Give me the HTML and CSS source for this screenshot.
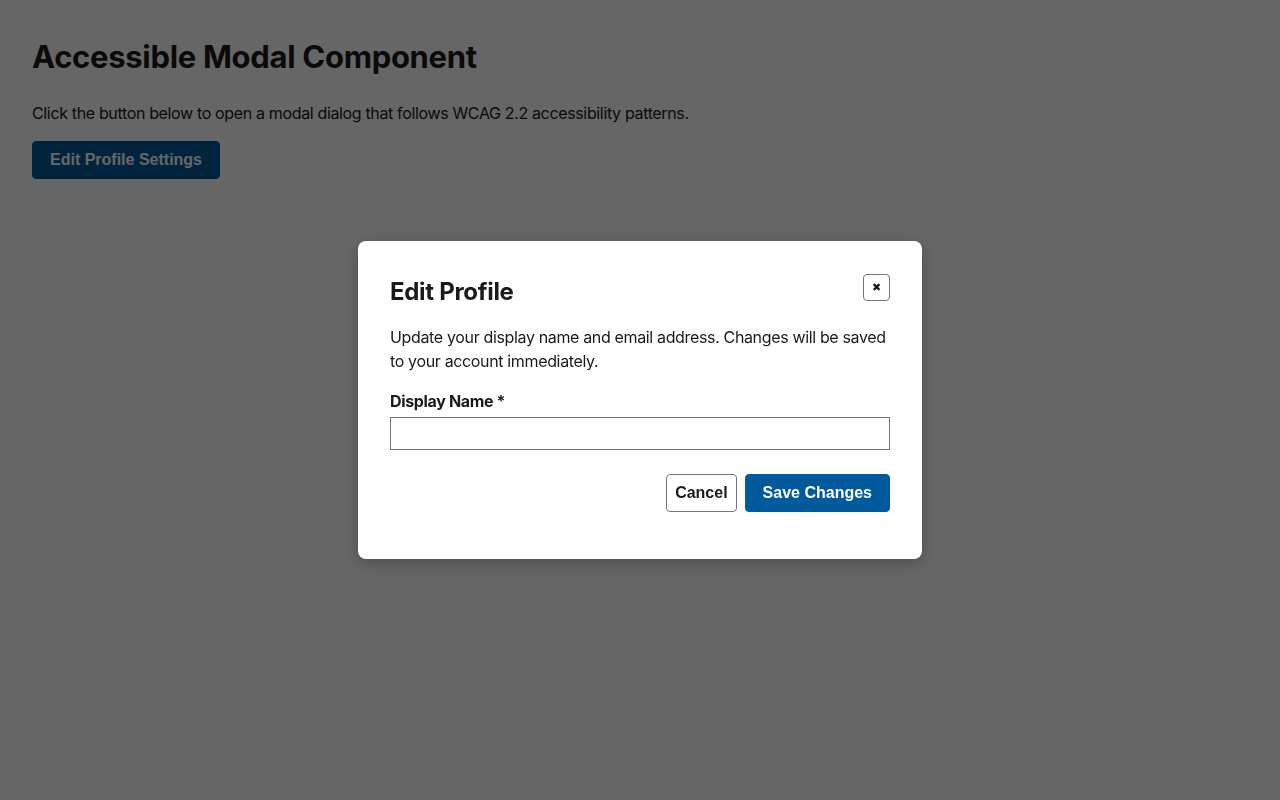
FILE: index.html
```html
<!DOCTYPE html>
<html lang="en">
<head>
<meta charset="utf-8">
<title>Accessible Modal Component</title>
<link rel="stylesheet" href="styles.css">
</head>
<body>
<main class="page">
  <h1 class="page-title">Accessible Modal Component</h1>
  <p class="page-intro">Click the button below to open a modal dialog that follows WCAG 2.2 accessibility patterns.</p>
  <button class="btn btn-primary" type="button">Edit Profile Settings</button>
</main>
<div class="overlay">
  <div class="modal" role="dialog" aria-modal="true" aria-labelledby="modal-title">
    <div class="modal-header">
      <h2 id="modal-title" class="modal-title">Edit Profile</h2>
      <button class="close-btn" type="button" aria-label="Close">&#x2716;</button>
    </div>
    <p class="modal-desc">Update your display name and email address. Changes will be saved to your account immediately.</p>
    <label class="field-label" for="display-name">Display Name *</label>
    <input class="field-input" id="display-name" type="text">
    <div class="modal-actions">
      <button class="btn btn-secondary" type="button">Cancel</button>
      <button class="btn btn-primary" type="button">Save Changes</button>
    </div>
  </div>
</div>
</body>
</html>
```
FILE: styles.css
```css
html, body {
  margin: 0;
  padding: 0;
  height: 100%;
}
body {
  background: #ffffff;
  color: #1a1a1a;
  font-family: "Inter", "Noto Sans", sans-serif;
  font-size: 16px;
  line-height: 1.5;
  letter-spacing: -0.35px;
}
.page {
  padding: 32px;
}
.page-title {
  margin: 0 0 26px;
  padding-top: 6px;
  font-size: 31px;
  font-weight: 700;
  line-height: 1.2;
  letter-spacing: -0.3px;
}
.page-intro {
  margin: 0 0 16px;
  font-size: 16px;
  line-height: 1.5;
}
.btn {
  font-family: "Liberation Sans", Arial, sans-serif;
  font-size: 16px;
  font-weight: 700;
  line-height: 18px;
  letter-spacing: 0;
  border-radius: 4px;
  cursor: pointer;
  box-sizing: border-box;
  height: 38px;
}
.btn-primary {
  background: #005a9c;
  color: #ffffff;
  border: 1px solid #005a9c;
  padding: 9px 17px;
}
.btn-secondary {
  background: #ffffff;
  color: #1a1a1a;
  border: 1px solid #767676;
  padding: 9px 8px;
}
.overlay {
  position: fixed;
  inset: 0;
  background: rgba(0, 0, 0, 0.6);
  display: flex;
  align-items: center;
  justify-content: center;
}
.modal {
  background: #ffffff;
  width: 500px;
  padding: 33px 32px 32px;
  border-radius: 8px;
  box-shadow: 0 4px 16px rgba(0, 0, 0, 0.25);
}
.modal-header {
  display: flex;
  justify-content: space-between;
  align-items: flex-start;
  margin-bottom: 19px;
}
.modal-title {
  margin: 4px 0 0;
  font-size: 24px;
  font-weight: 700;
  line-height: 1.2;
  letter-spacing: -0.3px;
}
.close-btn {
  width: 27px;
  height: 27px;
  margin-top: 0;
  padding: 0;
  background: #ffffff;
  border: 1px solid #767676;
  border-radius: 4px;
  color: #1a1a1a;
  font-family: "DejaVu Sans", sans-serif;
  font-size: 11px;
  line-height: 1;
  display: flex;
  align-items: center;
  justify-content: center;
  cursor: pointer;
}
.modal-desc {
  margin: 0 0 16px;
  line-height: 24px;
}
.field-label {
  display: block;
  font-weight: 700;
  margin-bottom: 4px;
}
.field-input {
  display: block;
  width: 100%;
  box-sizing: border-box;
  height: 33px;
  border: 1px solid #767676;
  border-radius: 0;
  padding: 6px 8px;
  font-family: inherit;
  font-size: 16px;
  margin: 0;
}
.modal-actions {
  display: flex;
  justify-content: flex-end;
  gap: 8px;
  margin-top: 24px;
  margin-bottom: 15px;
}
```
